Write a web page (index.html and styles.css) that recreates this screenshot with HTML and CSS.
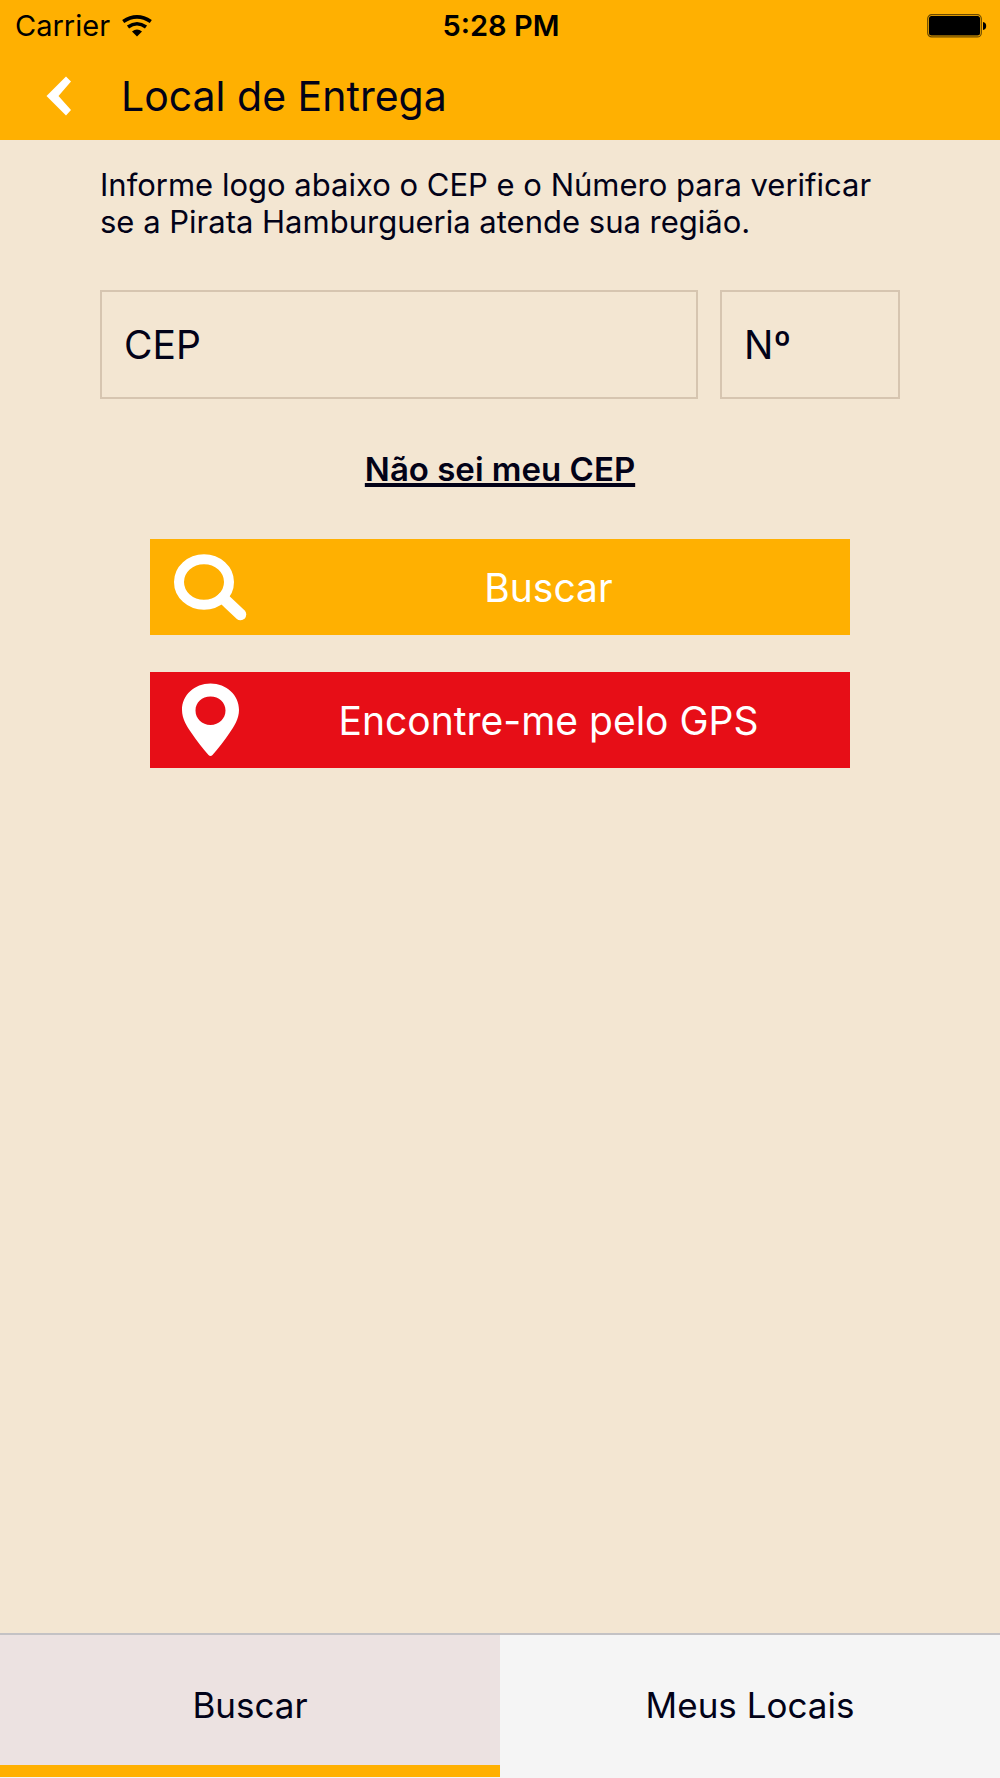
FILE: index.html
```html
<!DOCTYPE html>
<html lang="pt-BR">
<head>
<meta charset="utf-8">
<meta name="viewport" content="width=device-width, initial-scale=1">
<title>Local de Entrega</title>
<link rel="stylesheet" href="styles.css">
</head>
<body>
<header class="top">
  <div class="status">
    <div class="carrier">
      <span>Carrier</span>
      <svg class="wifi" width="30" height="22" viewBox="0 0 30 22" aria-hidden="true">
        <path d="M1.200 6.500 Q15 -2.800 28.800 6.500" fill="none" stroke="#000" stroke-width="3.600"/>
        <path d="M6 12 Q15 5.500 24 12" fill="none" stroke="#000" stroke-width="3.600"/>
        <path d="M10 16.500 Q15 12.500 20 16.500 L15 21.500 Z"/>
      </svg>
    </div>
    <time class="clock">5:28 PM</time>
    <svg class="battery" width="60" height="24" viewBox="0 0 60 24" aria-hidden="true">
      <rect x="0.7" y="0.7" width="53.6" height="22.2" rx="4" fill="none" stroke="#6b4a00" stroke-width="1.2"/>
      <rect x="2" y="2" width="51" height="19.6" rx="2.5"/>
      <path d="M56 8 Q59.2 8.6 59.2 12 Q59.2 15.4 56 16 Z"/>
    </svg>
  </div>
  <div class="nav">
    <button class="back" type="button" aria-label="Voltar">
      <svg width="26" height="40" viewBox="0 0 26 40" aria-hidden="true">
        <path d="M20 0.5 L25 5.5 L12.5 20 L25 34 L20 39.5 L0.5 20 Z" fill="#fff"/>
      </svg>
    </button>
    <h1 class="title">Local de Entrega</h1>
  </div>
</header>

<main class="content">
  <p class="intro">Informe logo abaixo o CEP e o Número para verificar se a Pirata Hamburgueria atende sua região.</p>
  <form class="form">
    <div class="fields">
      <input class="field" type="text" aria-label="CEP" placeholder="CEP">
      <input class="field" type="text" aria-label="Número" placeholder="Nº">
    </div>
    <a class="help" href="#">Não sei meu CEP</a>
    <div class="actions">
      <button class="action" type="button">
        <svg class="action-icon" width="74" height="74" viewBox="0 0 74 74" aria-hidden="true">
          <ellipse cx="31" cy="32" rx="25" ry="22.8" fill="none" stroke="#fff" stroke-width="10"/>
          <path d="M50 48 L67.5 64.5" stroke="#fff" stroke-width="11.5" stroke-linecap="round"/>
        </svg>
        <span class="action-label">Buscar</span>
      </button>
      <button class="action action-gps" type="button">
        <svg class="action-icon" width="74" height="74" viewBox="0 0 74 74" aria-hidden="true">
          <path fill="#fff" fill-rule="evenodd" d="M37.500 0.500 C21.500 0.500 9 12 9 27 C9 36 14 43.500 18.500 50 C23.500 57.500 30 66 35.500 72 Q37.500 74 39.500 72 C45 66 51.500 57.500 56.500 50 C61 43.500 66 36 66 27 C66 12 53.500 0.500 37.500 0.500 Z M37.500 13.500 C46 13.500 52.500 19.500 52.500 27.500 C52.500 35.500 46 42 37.500 42 C29 42 22.500 35.500 22.500 27.500 C22.500 19.500 29 13.500 37.500 13.500 Z"/>
        </svg>
        <span class="action-label">Encontre-me pelo GPS</span>
      </button>
    </div>
  </form>
</main>

<nav class="tabs">
  <a class="tab tab-active" href="#" aria-current="page">Buscar</a>
  <a class="tab" href="#">Meus Locais</a>
</nav>
</body>
</html>
```
FILE: styles.css
```css
* {
  box-sizing: border-box;
}

body {
  margin: 0;
  min-height: 100vh;
  display: flex;
  flex-direction: column;
  background: #f3e6d2;
  color: #020218;
  font-family: Inter, "Liberation Sans", sans-serif;
}

.top {
  background: #ffb001;
}

.status {
  display: grid;
  grid-template-columns: 1fr auto 1fr;
  align-items: center;
  height: 50px;
  padding: 0 13px 0 15px;
  color: #000;
  font-size: 29px;
  line-height: 52px;
}

.carrier {
  display: flex;
  align-items: center;
  gap: 12px;
}

.wifi,
.battery {
  display: block;
}

.clock {
  font-weight: 600;
}

.battery {
  justify-self: end;
}

.nav {
  display: flex;
  align-items: center;
  gap: 49px;
  height: 90px;
  padding: 2px 46px 0;
}

.back {
  display: flex;
  padding: 0;
  border: 0;
  background: none;
}

.title {
  margin: 0;
  font-size: 41px;
  font-weight: 400;
  line-height: 88px;
}

.content {
  flex: 1;
  padding: 26px 10% 40px;
}

.intro {
  margin: 0;
  font-size: 31px;
  line-height: 37px;
}

.form {
  display: flex;
  flex-direction: column;
  margin-top: 50px;
}

.fields {
  display: grid;
  grid-template-columns: 598fr 180fr;
  gap: 22px;
}

.field {
  width: 100%;
  min-width: 0;
  height: 109px;
  padding: 0 22px;
  border: 2px solid #d6c5b0;
  border-radius: 0;
  background: transparent;
  color: inherit;
  font: inherit;
  font-size: 39px;
}

.field::placeholder {
  color: inherit;
  opacity: 1;
}

.help {
  align-self: center;
  margin-top: 48px;
  color: inherit;
  font-size: 33px;
  font-weight: 600;
  line-height: 44px;
  text-decoration-thickness: 4px;
  text-underline-offset: 2px;
  text-decoration-skip-ink: none;
}

.actions {
  display: grid;
  gap: 37px;
  margin: 48px 50px 0;
}

.action {
  display: flex;
  align-items: center;
  height: 96px;
  padding: 0 0 0 23px;
  border: 0;
  background: #ffb001;
  color: #fff;
  font: inherit;
  font-size: 39px;
}

.action-gps {
  background: #e70e17;
}

.action-icon {
  flex: none;
}

.action-label {
  flex: 1;
  text-align: center;
}

.tabs {
  display: grid;
  grid-template-columns: 1fr 1fr;
  padding-bottom: 1px;
  border-top: 2px solid #c4c2c4;
  background: #f5f5f5;
}

.tab {
  padding-top: 10px;
  border-bottom: 12px solid transparent;
  color: inherit;
  font-size: 35px;
  line-height: 120px;
  text-align: center;
  text-decoration: none;
}

.tab-active {
  border-bottom-color: #ffb001;
  background: #ece2e1;
}
```
